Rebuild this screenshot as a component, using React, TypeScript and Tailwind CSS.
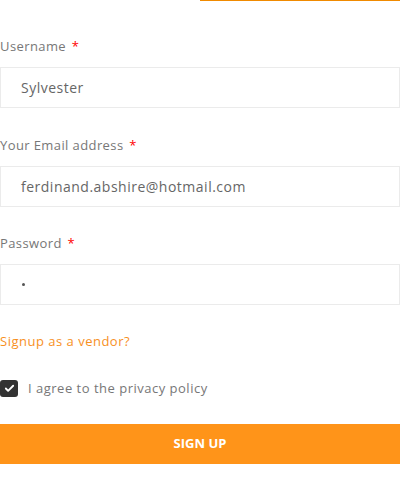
import { Check } from "lucide-react";

function Field({ label, children }: { label: string; children: React.ReactNode }) {
  return (
    <div className="mb-[26px]">
      <label className="mb-[11px] block text-[13px] leading-[20px] tracking-[0.4px] text-[#777]">
        {label} <span className="ml-[2px] text-[#f00]">*</span>
      </label>
      <div className="flex h-[41px] items-center border border-[#ebebeb] bg-white px-[20px] text-[14px] tracking-[0.5px] text-[#666]">
        {children}
      </div>
    </div>
  );
}

export default function App() {
  return (
    <div className="h-[482px] w-[400px] bg-white font-['Open_Sans',sans-serif]">
      <div className="flex">
        <div className="w-[200px]" />
        <div className="h-px w-[200px] bg-[#f08a00]" />
      </div>
      <div className="pt-[35px]">
        <Field label="Username">Sylvester</Field>
        <div className="h-px" />
        <Field label="Your Email address">ferdinand.abshire@hotmail.com</Field>
        <Field label="Password">
          <span className="ml-[1px] h-[3px] w-[3px] rounded-full bg-[#555]" />
        </Field>
        <a className="block text-[13px] leading-[20px] tracking-[0.5px] text-[#f7901e]">Signup as a vendor?</a>
        <div className="mt-[27px] flex items-center gap-[10px]">
          <span className="flex h-[17px] w-[18px] items-center justify-center rounded-[3px] bg-[#333]">
            <Check className="h-[11px] w-[11px] text-white" strokeWidth={4} />
          </span>
          <span className="text-[13px] leading-[20px] tracking-[0.5px] text-[#777]">I agree to the privacy policy</span>
        </div>
        <button
          type="button"
          className="mt-[26px] flex h-[40px] w-full items-center justify-center bg-[#ff9419] text-[13px] font-bold text-white"
        >
          SIGN UP
        </button>
      </div>
    </div>
  );
}
